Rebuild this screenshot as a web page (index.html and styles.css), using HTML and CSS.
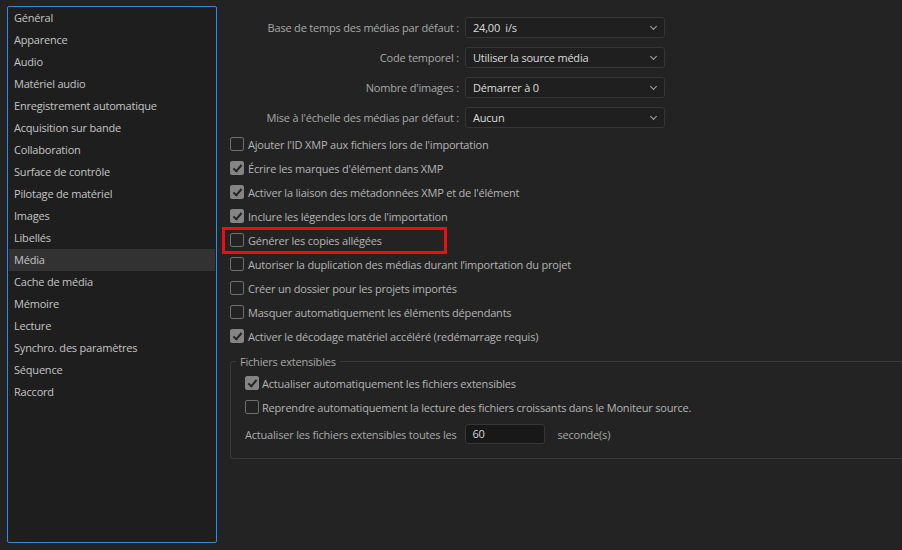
FILE: index.html
```html
<!DOCTYPE html>
<html lang="fr">
<head>
  <meta charset="UTF-8" />
  <title>Préférences - Média</title>
  <link rel="stylesheet" href="styles.css">
</head>
<body>
  <div class="prefs">
    <ul class="side">
      <li>Général</li>
      <li>Apparence</li>
      <li>Audio</li>
      <li>Matériel audio</li>
      <li>Enregistrement automatique</li>
      <li>Acquisition sur bande</li>
      <li>Collaboration</li>
      <li>Surface de contrôle</li>
      <li>Pilotage de matériel</li>
      <li>Images</li>
      <li>Libellés</li>
      <li class="active">Média</li>
      <li>Cache de média</li>
      <li>Mémoire</li>
      <li>Lecture</li>
      <li>Synchro. des paramètres</li>
      <li>Séquence</li>
      <li>Raccord</li>
    </ul>

    <div class="main">
      <div class="fields">
        <label>Base de temps des médias par défaut :</label>
        <div class="select">24,00&nbsp; i/s</div>
        <label>Code temporel :</label>
        <div class="select">Utiliser la source média</div>
        <label>Nombre d'images :</label>
        <div class="select">Démarrer à 0</div>
        <label>Mise à l'échelle des médias par défaut :</label>
        <div class="select">Aucun</div>
      </div>

      <div class="checks">
        <div class="check"><span class="box"></span>Ajouter l'ID XMP aux fichiers lors de l'importation</div>
        <div class="check on"><span class="box"></span>Écrire les marques d'élément dans XMP</div>
        <div class="check on"><span class="box"></span>Activer la liaison des métadonnées XMP et de l'élément</div>
        <div class="check on"><span class="box"></span>Inclure les légendes lors de l'importation</div>
        <div class="check mark"><span class="box"></span>Générer les copies allégées</div>
        <div class="check"><span class="box"></span>Autoriser la duplication des médias durant l’importation du projet</div>
        <div class="check"><span class="box"></span>Créer un dossier pour les projets importés</div>
        <div class="check"><span class="box"></span>Masquer automatiquement les éléments dépendants</div>
        <div class="check on"><span class="box"></span>Activer le décodage matériel accéléré (redémarrage requis)</div>
      </div>

      <fieldset class="group">
        <legend>Fichiers extensibles</legend>
        <div class="check on"><span class="box"></span>Actualiser automatiquement les fichiers extensibles</div>
        <div class="check"><span class="box"></span>Reprendre automatiquement la lecture des fichiers croissants dans le Moniteur source.</div>
        <div class="interval">
          <span>Actualiser les fichiers extensibles toutes les</span>
          <div class="num">60</div>
          <span>seconde(s)</span>
        </div>
      </fieldset>
    </div>
  </div>
</body>
</html>
```

FILE: styles.css
```css
body { margin: 0; background: #232323; font-family: "Open Sans", "Noto Sans", sans-serif; font-size: 11px; letter-spacing: -0.2px; color: #b2b2b2; overflow: hidden; }
.prefs { display: flex; height: 550px; }

.side {
  list-style: none;
  margin: 6px 0 0 7px;
  padding: 0 1px;
  width: 206px;
  height: 535px;
  background: #1e1e1e;
  border: 1px solid #2d8ceb;
  border-radius: 2px;
}
.side li { height: 22px; line-height: 22px; padding-left: 5px; color: #c4c4c4; white-space: nowrap; }
.side li.active { background: #323232; }

.main { flex: 1; padding: 17px 0 0 13px; }

.fields { display: grid; grid-template-columns: 229px 200px; column-gap: 6px; row-gap: 9px; }
.fields label { text-align: right; line-height: 21px; color: #a8a8a8; white-space: nowrap; }
.select {
  position: relative;
  height: 19px;
  line-height: 19px;
  padding-left: 7px;
  background: #1f1f1f;
  border: 1px solid #363636;
  border-radius: 3px;
  color: #dcdcdc;
}
.select::after {
  content: "";
  position: absolute;
  right: 8px;
  top: 6px;
  width: 4px;
  height: 4px;
  border-right: 1px solid #a6a6a6;
  border-bottom: 1px solid #a6a6a6;
  transform: rotate(45deg);
}

.checks { margin-top: 4px; }
.check { position: relative; display: flex; align-items: center; height: 24px; white-space: nowrap; color: #b4b4b4; }
.box {
  box-sizing: border-box;
  width: 14px;
  height: 14px;
  margin-right: 4px;
  border: 1.5px solid #6e6e6e;
  border-radius: 2px;
  position: relative;
  flex: none;
}
.check.on .box { background: #848484; border-color: #848484; }
.check.on .box::after {
  content: "";
  position: absolute;
  left: 3.5px;
  top: 0.5px;
  width: 3px;
  height: 7px;
  border-right: 2px solid #262626;
  border-bottom: 2px solid #262626;
  transform: rotate(40deg);
}
.check.mark::after {
  content: "";
  position: absolute;
  left: -8px;
  top: -1px;
  width: 225px;
  height: 27px;
  box-sizing: border-box;
  border: 3px solid #f20d0d;
}

.group {
  margin: 6px 0 0 0;
  padding: 2px 0 9px 14px;
  border: 1px solid #393939;
  border-right: none;
  border-radius: 3px 0 0 3px;
}
.group legend { padding: 0 4px; margin-left: -9px; color: #a8a8a8; }
.group .check { color: #b4b4b4; }
.group .box { margin-right: 3px; }
.interval { display: flex; align-items: center; height: 30px; color: #a8a8a8; }
.num {
  width: 72px;
  height: 18px;
  line-height: 18px;
  margin: 0 12px 0 9px;
  padding-left: 6px;
  background: #181818;
  border: 1px solid #363636;
  border-radius: 3px;
  color: #d4d4d4;
}
```
